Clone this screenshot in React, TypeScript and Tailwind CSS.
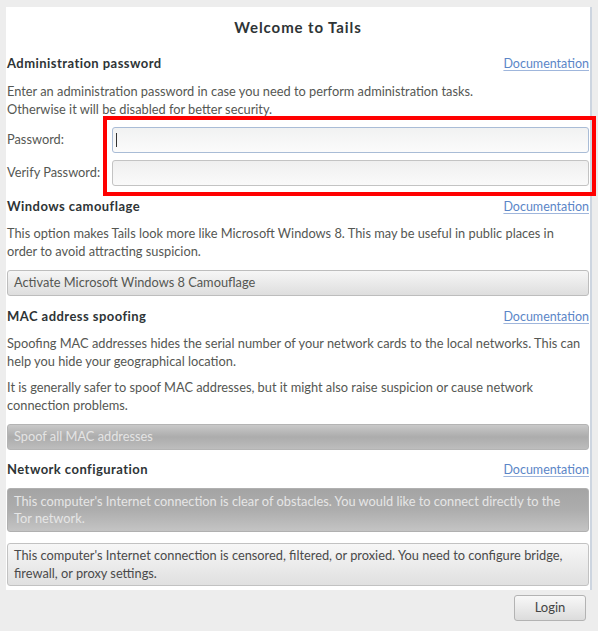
export default function App() {
  return (
    <div className="relative flex h-[631px] w-[598px] flex-col bg-[#ededed] pl-[6px] pt-[7px] text-[12.8px] text-[#555753] [font-family:Lato,'Liberation_Sans',sans-serif]">
      <div className="flex w-[586px] flex-col border-r-2 border-r-[#cdd5e0] bg-white px-[1px] pb-[4px] pt-[10px]">
        <h1 className="text-center text-[15px] font-bold leading-[20px] tracking-[0.9px] text-[#2e3436]">
          Welcome to Tails
        </h1>

        <SectionHeader title="Administration password" className="mt-[17px]" />
        <p className="mt-[9px] whitespace-nowrap leading-[17.5px]">
          Enter an administration password in case you need to perform administration tasks.
          <br />
          Otherwise it will be disabled for better security.
        </p>
        <div className="mt-[9px] flex items-center">
          <label className="w-[105px]">Password:</label>
          <div className="flex h-[26px] flex-1 items-center rounded-[3px] border border-[#a9bcd6] bg-gradient-to-b from-[#f1f2f2] to-[#fbfbfb] pl-[3px]">
            <span className="h-[14px] w-px bg-[#333]" />
          </div>
        </div>
        <div className="mt-[7px] flex items-center">
          <label className="w-[105px]">Verify Password:</label>
          <div className="h-[26px] flex-1 rounded-[3px] border border-[#c3c3c3] bg-gradient-to-b from-[#efefef] to-[#fafafa]" />
        </div>

        <SectionHeader title="Windows camouflage" className="mt-[11px]" />
        <p className="mt-[8px] whitespace-nowrap leading-[17.5px]">
          This option makes Tails look more like Microsoft Windows 8. This may be useful in public places in
          <br />
          order to avoid attracting suspicion.
        </p>
        <button className="mt-[10px] flex h-[26px] items-center rounded-[3px] border border-[#bdbdbd] bg-gradient-to-b from-[#f6f6f6] to-[#dedede] px-[6px] text-left text-[#555753]">
          Activate Microsoft Windows 8 Camouflage
        </button>

        <SectionHeader title="MAC address spoofing" className="mt-[11px]" />
        <p className="mt-[8px] whitespace-nowrap leading-[17.5px]">
          Spoofing MAC addresses hides the serial number of your network cards to the local networks. This can
          <br />
          help you hide your geographical location.
        </p>
        <p className="mt-[9px] whitespace-nowrap leading-[17.5px]">
          It is generally safer to spoof MAC addresses, but it might also raise suspicion or cause network
          <br />
          connection problems.
        </p>
        <button className="mt-[10px] flex h-[26px] items-center rounded-[3px] border border-[#b4b4b4] bg-gradient-to-b from-[#c9c9c9] via-[#acacac] to-[#bdbdbd] px-[6px] text-left text-[#e4e4e4]">
          Spoof all MAC addresses
        </button>

        <SectionHeader title="Network configuration" className="mt-[10px]" />
        <button className="mt-[8px] h-[44px] whitespace-nowrap rounded-[3px] border border-[#b0b0b0] bg-gradient-to-b from-[#a4a4a4] via-[#adadad] to-[#c4c4c4] px-[6px] text-left leading-[17.5px] text-[#e6e6e6]">
          This computer's Internet connection is clear of obstacles. You would like to connect directly to the
          <br />
          Tor network.
        </button>
        <button className="mt-[11px] h-[43px] whitespace-nowrap rounded-[3px] border border-[#c2c2c2] bg-gradient-to-b from-[#f7f7f7] to-[#e0e0e0] px-[6px] text-left leading-[17.5px] text-[#4a4a4a]">
          This computer's Internet connection is censored, filtered, or proxied. You need to configure bridge,
          <br />
          firewall, or proxy settings.
        </button>
      </div>

      <div className="mt-[5px] flex justify-end pr-[12px]">
        <button className="h-[26px] w-[72px] rounded-[3px] border border-[#b3b3b3] bg-gradient-to-b from-[#f8f8f8] to-[#dcdcdc] text-[13px] text-[#444]">
          Login
        </button>
      </div>

      <div className="pointer-events-none absolute left-[103px] top-[116px] h-[80px] w-[493px] border-4 border-[#ff0000]" />
    </div>
  )
}

function SectionHeader({ title, className }: { title: string; className?: string }) {
  return (
    <div className={`flex h-[20px] items-center justify-between ${className ?? ""}`}>
      <h2 className="text-[13px] font-bold tracking-[0.45px] text-[#2e3436]">{title}</h2>
      <a href="#" className="text-[12.5px] text-[#5b86c7] underline decoration-[#9fb6dc] underline-offset-2">
        Documentation
      </a>
    </div>
  )
}
